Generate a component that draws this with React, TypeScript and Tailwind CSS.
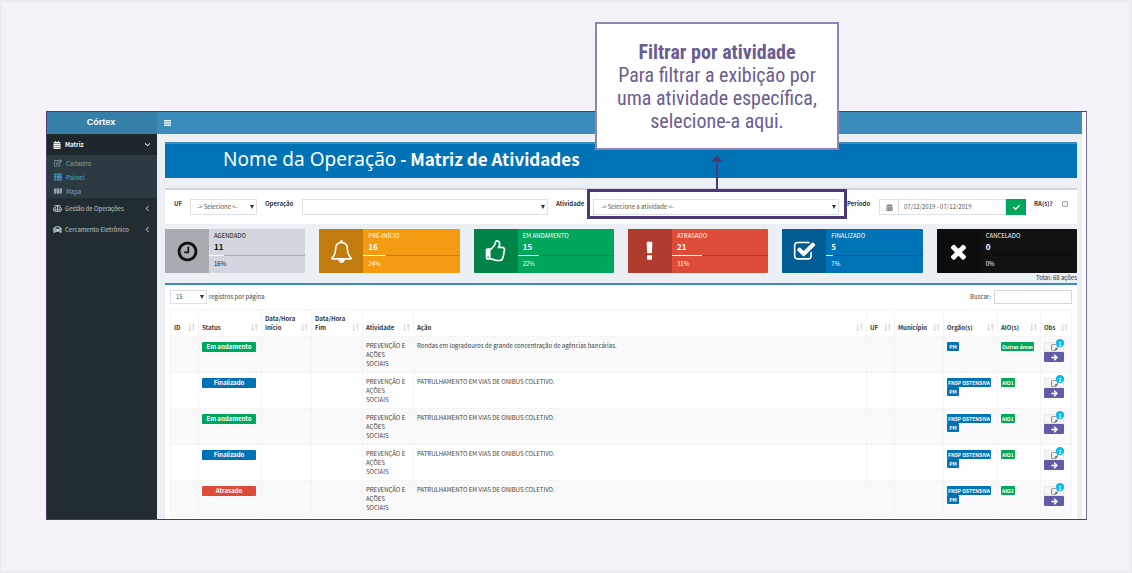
import type { ReactNode } from "react";
import {
  FaArrowRight,
  FaBalanceScale,
  FaCalendarAlt,
  FaCar,
  FaCheck,
  FaMap,
  FaRegEdit,
  FaRegStickyNote,
  FaThList,
} from "react-icons/fa";
import { FaAngleDown, FaAngleLeft } from "react-icons/fa6";

const icons = {
  clock:
    "M1024 544v448q0 14-9 23t-23 9h-320q-14 0-23-9t-9-23v-64q0-14 9-23t23-9h224v-352q0-14 9-23t23-9h64q14 0 23 9t9 23zm416 352q0-148-73-273t-198-198-273-73-273 73-198 198-73 273 73 273 198 198 273 73 273-73 198-198 73-273zm224 0q0 209-103 385.5t-279.5 279.5-385.5 103-385.5-103-279.5-279.5-103-385.5 103-385.5 279.5-279.5 385.5-103 385.5 103 279.5 279.5 103 385.5z",
  bell: "M912 1696q0-16-16-16-59 0-101.5-42.5t-42.5-101.5q0-16-16-16t-16 16q0 73 51.5 124.5t124.5 51.5q16 0 16-16zm-666-288h1300q-266-300-266-832 0-51-24-105t-69-103-121.5-80.5-169.5-31.5-169.5 31.5-121.5 80.5-69 103-24 105q0 532-266 832zm1482 0q0 52-38 90t-90 38h-448q0 106-75 181t-181 75-181-75-75-181h-448q-52 0-90-38t-38-90q50-42 91-88t85-119.5 74.5-158.5 50-206 19.5-260q0-152 117-282.5t307-158.5q-8-19-8-39 0-40 28-68t68-28 68 28 28 68q0 20-8 39 190 28 307 158.5t117 282.5q0 139 19.5 260t50 206 74.5 158.5 85 119.5 91 88z",
  thumb:
    "M384 1344q0-26-19-45t-45-19-45 19-19 45 19 45 45 19 45-19 19-45zm1152-576q0-51-39-89.5t-89-38.5h-352q0-58 48-159.5t48-160.5q0-98-32-145t-128-47q-26 26-38 85t-30.5 125.5-59.5 109.5q-22 23-77 91-4 5-23 30t-31.5 41-34.5 42.5-40 44-38.5 35.5-40 27-35.5 9h-32v640h32q13 0 31.5 3t33 6.5 38 11 35 11.5 35.5 12.5 29 10.5q211 73 342 73h121q192 0 192-167 0-26-5-56 30-16 47.5-52.5t17.5-73.5-18-69q53-50 53-119 0-25-10-55.5t-25-47.5q32-1 53.5-47t21.5-81zm128-1q0 89-49 163 9 33 9 69 0 77-38 144 3 21 3 43 0 101-60 178 1 139-85 219.5t-227 80.5h-129q-96 0-188.5-22.5t-213.5-66.5q-116-40-138-40h-288q-53 0-90.5-37.5t-37.5-90.5v-640q0-53 37.5-90.5t90.5-37.5h274q36-24 137-155 58-75 107-128 24-25 35.5-85.5t30.5-126.5 62-108q39-37 90-37 84 0 151 32.5t102 101.5 35 186q0 93-48 192h176q104 0 180 76t76 179z",
  exclamation:
    "M1088 1248v224q0 26-19 45t-45 19h-256q-26 0-45-19t-19-45v-224q0-26 19-45t45-19h256q26 0 45 19t19 45zm30-1056l-28 768q-1 26-20.5 45t-45.5 19h-256q-26 0-45.5-19t-20.5-45l-28-768q-1-26 17.5-45t44.5-19h320q26 0 44.5 19t17.5 45z",
  checkSquare:
    "M1472 930v318q0 119-84.5 203.5t-203.5 84.5h-832q-119 0-203.5-84.5t-84.5-203.5v-832q0-119 84.5-203.5t203.5-84.5h832q63 0 117 25 15 7 18 23 3 17-9 29l-49 49q-10 10-23 10-3 0-9-2-23-6-45-6h-832q-66 0-113 47t-47 113v832q0 66 47 113t113 47h832q66 0 113-47t47-113v-254q0-13 9-22l64-64q10-10 23-10 6 0 12 3 20 8 20 29zm231-489l-814 814q-24 24-57 24t-57-24l-430-430q-24-24-24-57t24-57l110-110q24-24 57-24t57 24l263 263 647-647q24-24 57-24t57 24l110 110q24 24 24 57t-24 57z",
  times:
    "M1490 1322q0 40-28 68l-136 136q-28 28-68 28t-68-28l-294-294-294 294q-28 28-68 28t-68-28l-136-136q-28-28-28-68t28-68l294-294-294-294q-28-28-28-68t28-68l136-136q28-28 68-28t68 28l294 294 294-294q28-28 68-28t68 28l136 136q28 28 28 68t-28 68l-294 294 294 294q28 28 28 68z",
};

const cards = [
  { title: "AGENDADO", count: 11, percent: 16, icon: icons.clock, box: "bg-[#d2d6de] text-[#111]" },
  { title: "PRÉ-INÍCIO", count: 16, percent: 24, icon: icons.bell, box: "bg-[#f39c12] text-white" },
  { title: "EM ANDAMENTO", count: 15, percent: 22, icon: icons.thumb, box: "bg-[#00a65a] text-white" },
  { title: "ATRASADO", count: 21, percent: 31, icon: icons.exclamation, box: "bg-[#dd4b39] text-white" },
  { title: "FINALIZADO", count: 5, percent: 7, icon: icons.checkSquare, box: "bg-[#0073b7] text-white" },
  { title: "CANCELADO", count: 0, percent: 0, icon: icons.times, box: "bg-[#111] text-white" },
];

const columns = [
  { label: "ID", width: "w-[28px]" },
  { label: "Status", width: "w-[63px]" },
  { label: "Data/Hora Início", width: "w-[50px]" },
  { label: "Data/Hora Fim", width: "w-[51px]" },
  { label: "Atividade", width: "w-[51px]" },
  { label: "Ação", width: "" },
  { label: "UF", width: "w-[28px]" },
  { label: "Município", width: "w-[49px]" },
  { label: "Orgão(s)", width: "w-[54px]" },
  { label: "AIO(s)", width: "w-[43px]" },
  { label: "Obs", width: "w-[31px]" },
];

const statusColor: Record<string, string> = {
  "Em andamento": "bg-[#00a65a]",
  Finalizado: "bg-[#0073b7]",
  Atrasado: "bg-[#dd4b39]",
};

const patrol = "PATRULHAMENTO EM VIAS DE ONIBUS COLETIVO.";
const rows = [
  {
    status: "Em andamento",
    action: "Rondas em logradouros de grande concentração de agências bancárias.",
    agencies: ["PM"],
    area: "Outras áreas",
  },
  { status: "Finalizado", action: patrol, agencies: ["FNSP OSTENSIVA", "PM"], area: "AIO1" },
  { status: "Em andamento", action: patrol, agencies: ["FNSP OSTENSIVA", "PM"], area: "AIO1" },
  { status: "Finalizado", action: patrol, agencies: ["FNSP OSTENSIVA", "PM"], area: "AIO1" },
  { status: "Atrasado", action: patrol, agencies: ["FNSP OSTENSIVA", "PM"], area: "AIO2" },
];

function Select({ id, children, look }: { id: string; children: ReactNode; look: string }) {
  return (
    <div className="relative flex w-full items-center">
      <select
        id={id}
        className={`block w-full appearance-none border border-[#dde0e5] bg-white text-[6px] text-[#555] ${look}`}
      >
        {children}
      </select>
      <svg viewBox="0 0 4 4" className="pointer-events-none absolute right-[3px] size-1 fill-[#333]">
        <path d="M0 0h4L2 4z" />
      </svg>
    </div>
  );
}

function SortIcon() {
  return (
    <svg viewBox="0 0 8 8" className="mb-px size-[7px] shrink-0 fill-none stroke-[#c4c4c4]" strokeWidth="0.9">
      <path d="M2 0.5v7M0.6 6L2 7.5 3.4 6M6 7.5v-7M4.6 2L6 0.5 7.4 2" />
    </svg>
  );
}

function Tag({ color, children }: { color: string; children: ReactNode }) {
  return (
    <span className={`block w-fit min-w-3 rounded-[1px] px-px text-center text-[5px] leading-[9px] font-bold whitespace-nowrap text-white ${color}`}>
      {children}
    </span>
  );
}

function Sidebar() {
  return (
    <aside className="flex w-[110px] shrink-0 flex-col bg-[#222d32] text-[6px] text-[#b8c7ce]">
      <div className="flex h-[22px] items-center justify-center bg-[#367fa9] pr-0.5 font-['Liberation_Sans',sans-serif] text-[9px] font-bold text-white">
        Córtex
      </div>
      <nav>
        <a href="#matriz" className="flex h-[21px] items-center gap-1 bg-[#1e282c] px-1.5 font-bold text-white">
          <FaCalendarAlt className="size-2" />
          <span className="flex-1">Matriz</span>
          <FaAngleDown className="size-[7px]" />
        </a>
        <div className="flex flex-col bg-[#2c3b41] pt-px text-[#8aa4af]">
          <a href="#cadastro" className="flex h-3.5 items-center gap-1 px-[7px]">
            <FaRegEdit className="size-2" />
            Cadastro
          </a>
          <a href="#painel" className="flex h-3.5 items-center gap-1 px-[7px] font-bold text-[#3c8dbc]">
            <FaThList className="size-2" />
            Painel
          </a>
          <a href="#mapa" className="flex h-3.5 items-center gap-1 px-[7px]">
            <FaMap className="size-2" />
            Mapa
          </a>
        </div>
        <a href="#gestao" className="flex h-[21px] items-center gap-[3px] px-1.5">
          <FaBalanceScale className="size-[9px]" />
          <span className="flex-1">Gestão de Operações</span>
          <FaAngleLeft className="size-[7px]" />
        </a>
        <a href="#cercamento" className="flex h-[21px] items-center gap-[3px] px-1.5">
          <FaCar className="size-[9px]" />
          <span className="flex-1">Cercamento Eletrônico</span>
          <FaAngleLeft className="size-[7px]" />
        </a>
      </nav>
    </aside>
  );
}

function Callout() {
  return (
    <div className="pointer-events-none absolute -top-2.5 -right-2 -bottom-1 -left-1.5 z-10 border-3 border-[#4b3a75]">
      <div className="absolute bottom-full left-1/2 flex -translate-x-1/2 flex-col items-center pb-0.5">
        <div className="w-[244px] border-2 border-[#9184b0] bg-white pt-[17px] pb-[15px] text-center font-['Roboto_Condensed','Liberation_Sans_Narrow',Roboto,sans-serif] text-[20px] leading-[23px] text-[#6b5c91]">
          <strong className="block font-bold">Filtrar por atividade</strong>
          <p>
            Para filtrar a exibição por
            <br />
            uma atividade específica,
            <br />
            selecione-a aqui.
          </p>
        </div>
        <svg viewBox="0 0 12 35" className="mt-[5px] h-[35px] w-3 fill-[#4b3a75]">
          <path d="M6 0l6 7H7v28H5V7H0z" />
        </svg>
      </div>
    </div>
  );
}

function Filters() {
  return (
    <form className="flex items-start gap-2 border-t-2 border-[#d2d6de] bg-white px-[9px] pt-[9px] pb-[9px] text-[6px] leading-[10px] text-[#333]">
      <label htmlFor="uf" className="w-2 font-bold">UF</label>
      <div className="w-[67px]">
        <Select id="uf" look="h-4 px-1.5">
          <option>-&gt; Selecione &lt;-</option>
        </Select>
      </div>
      <label htmlFor="operacao" className="w-[29px] font-bold">Operação</label>
      <div className="flex-1">
        <Select id="operacao" look="h-4 px-1.5">
          <option></option>
        </Select>
      </div>
      <label htmlFor="atividade" className="w-[29px] font-bold">Atividade</label>
      <div className="relative flex-1">
        <Select id="atividade" look="h-4 px-[7px]">
          <option>-&gt; Selecione a atividade &lt;-</option>
        </Select>
        <Callout />
      </div>
      <label htmlFor="periodo" className="w-6 font-bold">Período</label>
      <div className="flex h-4 w-[147px]">
        <span className="flex w-[19px] items-center justify-center border border-r-0 border-[#dde0e5]">
          <FaCalendarAlt className="size-[7px] text-[#777]" />
        </span>
        <input
          id="periodo"
          defaultValue="07/12/2019 - 07/12/2019"
          className="min-w-0 flex-1 border border-[#dde0e5] px-[5px] text-[6px] text-[#555]"
        />
        <button type="button" aria-label="Aplicar" className="flex w-5 items-center justify-center bg-[#00a65a] text-white">
          <FaCheck className="size-[7px]" />
        </button>
      </div>
      <label htmlFor="ras" className="w-5 font-bold">RA(s)?</label>
      <input
        id="ras"
        type="checkbox"
        className="mt-[2px] size-1.5 appearance-none rounded-[1px] border border-[#aaa] bg-[#eee]"
      />
    </form>
  );
}

function Cards() {
  return (
    <div className="mt-[5px] grid grid-cols-6 gap-3.5">
      {cards.map((card) => (
        <section key={card.title} className={`flex h-11 rounded-[1px] ${card.box}`}>
          <div className="flex w-11 shrink-0 items-center justify-center bg-black/20">
            <svg viewBox="0 0 1792 1792" className="size-[23px] fill-current">
              <path d={card.icon} />
            </svg>
          </div>
          <div className="flex-1 pt-0.5 text-[6px]">
            <h3 className="pl-[5px] leading-[10px]">{card.title}</h3>
            <p className="pl-[5px] text-[8px] leading-3 font-bold">{card.count}</p>
            <div className="mt-[2px] h-px bg-black/20">
              <div className="h-px bg-white" style={{ width: `${card.percent}%` }} />
            </div>
            <p className="mt-[3px] pl-[5px] leading-[10px]">{card.percent}%</p>
          </div>
        </section>
      ))}
    </div>
  );
}

function ActivityTable() {
  return (
    <table className="mt-[5px] w-full table-fixed border-collapse text-[6px] leading-[9px] text-[#444]">
      <thead>
        <tr className="h-[27px]">
          {columns.map((column) => (
            <th key={column.label} className={`border border-[#f4f4f4] pr-[3px] pb-1 pl-[3px] text-left align-bottom font-bold text-[#333] ${column.width}`}>
              <div className="flex items-end justify-between">
                <span>{column.label}</span>
                <SortIcon />
              </div>
            </th>
          ))}
        </tr>
      </thead>
      <tbody>
        {rows.map((row, index) => (
          <tr key={index} className="h-9 align-top odd:bg-[#f9f9f9]">
            <td className="border border-[#f4f4f4]" />
            <td className="border border-[#f4f4f4] px-[3px] pt-[5px]">
              <span className={`block w-[54px] rounded-[1px] text-center leading-[10px] font-bold text-white ${statusColor[row.status]}`}>
                {row.status}
              </span>
            </td>
            <td className="border border-[#f4f4f4]" />
            <td className="border border-[#f4f4f4]" />
            <td className="border border-[#f4f4f4] px-[3px] pt-1">
              PREVENÇÃO E
              <br />
              AÇÕES
              <br />
              SOCIAIS
            </td>
            <td className="border border-[#f4f4f4] px-[3px] pt-1">{row.action}</td>
            <td className="border border-[#f4f4f4]" />
            <td className="border border-[#f4f4f4]" />
            <td className="border border-[#f4f4f4] px-[3px] pt-[5px]">
              {row.agencies.map((agency) => (
                <Tag key={agency} color="bg-[#0073b7]">{agency}</Tag>
              ))}
            </td>
            <td className="border border-[#f4f4f4] px-[3px] pt-[5px]">
              <Tag color="bg-[#00a65a]">{row.area}</Tag>
            </td>
            <td className="border border-[#f4f4f4] px-[3px] pt-[5px]">
              <div className="relative w-5">
                <button type="button" aria-label="Observações" className="flex h-2.5 w-full items-center justify-center border border-[#e7e7e7] bg-[#f4f4f4]">
                  <FaRegStickyNote className="size-[7px] text-[#444]" />
                </button>
                <span className="absolute -top-[3px] right-0 flex size-2 items-center justify-center rounded-full bg-[#00c0ef] text-[5px] font-bold text-white">
                  1
                </span>
                <button type="button" aria-label="Abrir" className="flex h-2.5 w-full items-center justify-center rounded-[1px] bg-[#605ca8]">
                  <FaArrowRight className="size-[7px] stroke-white stroke-[40px] text-white" />
                </button>
              </div>
            </td>
          </tr>
        ))}
      </tbody>
    </table>
  );
}

export default function App() {
  return (
    <div className="min-h-screen border-2 border-[#eceaf0] bg-[#f4f2f8] pt-[109px] pr-[43px] pb-[51px] pl-11 font-['Noto_Sans_CJK_SC',sans-serif]">
      <div className="flex border border-[#4b3a75] border-r-[#7d70a3] bg-white pr-1">
        <Sidebar />
        <div className="min-w-0 flex-1 bg-[#ecf0f5]">
          <header className="flex h-[22px] items-center bg-[#3c8dbc] pl-[7px]">
            <button type="button" aria-label="Menu" className="text-white">
              <svg viewBox="0 0 7 6" className="h-1.5 w-[7px] fill-white/90">
                <path d="M0 0h7v1.4H0zM0 2.3h7v1.4H0zM0 4.6h7V6H0z" />
              </svg>
            </button>
          </header>
          <main className="pt-2 pr-[5px] pl-2">
            <h1 className="h-9 border-t-2 border-[#3c8dbc] bg-[#0073b7] pl-[58px] text-[17px] leading-[29px] font-bold text-white">
              <span className="font-['Noto_Sans'] text-[19px] font-normal">Nome da Operação</span> - Matriz de Atividades
            </h1>
            <div className="mt-2.5">
              <Filters />
            </div>
            <Cards />
            <p className="text-right text-[6px] leading-[10px] text-[#333]">Total: 68 ações</p>
            <section className="border-t-2 border-[#3c8dbc] bg-white px-[5px] pt-[5px] pb-0.5">
              <div className="flex items-center justify-between text-[6px] leading-[10px] text-[#444]">
                <div className="flex items-center gap-0.5">
                  <div className="w-[37px]">
                    <Select id="page-size" look="h-3.5 px-[5px]">
                      <option>15</option>
                    </Select>
                  </div>
                  <label htmlFor="page-size">registros por página</label>
                </div>
                <div className="flex items-center gap-[3px]">
                  <label htmlFor="search">Buscar:</label>
                  <input id="search" className="h-3.5 w-[78px] border border-[#d2d6de] px-1" />
                </div>
              </div>
              <ActivityTable />
            </section>
          </main>
        </div>
      </div>
    </div>
  );
}
